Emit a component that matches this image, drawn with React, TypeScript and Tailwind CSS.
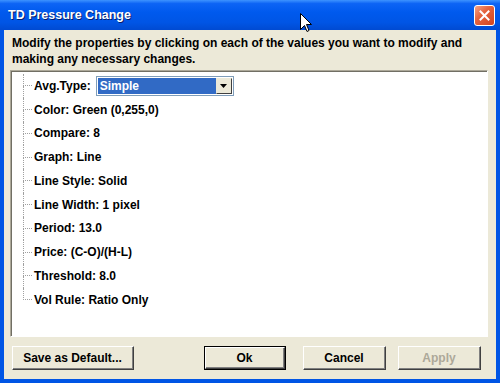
import React from "react";

const items = [
  "Color: Green (0,255,0)",
  "Compare: 8",
  "Graph: Line",
  "Line Style: Solid",
  "Line Width: 1 pixel",
  "Period: 13.0",
  "Price: (C-O)/(H-L)",
  "Threshold: 8.0",
  "Vol Rule: Ratio Only",
];

function Connector({ last }: { last?: boolean }) {
  return (
    <div className="flex flex-col self-stretch w-[9px] shrink-0">
      <div className="flex-1 border-l border-b border-dotted border-[#A0A0A0]" />
      <div className={"flex-1 border-l border-dotted " + (last ? "border-transparent" : "border-[#A0A0A0]")} />
    </div>
  );
}

function Btn({ children, def, disabled, w }: { children: React.ReactNode; def?: boolean; disabled?: boolean; w: string }) {
  return (
    <div className={(def ? "border border-black " : "") + w + " h-[24px] flex shrink-0"}>
      <div className="flex-1 border-t border-l border-white border-r border-b border-r-[#404040] border-b-[#404040] flex">
        <div className="flex-1 border-r border-b border-[#808080] bg-[#ECE9D8] flex items-center justify-center">
          <span className={"text-[12px] font-bold " + (disabled ? "text-[#ACA899]" : "text-black")}>{children}</span>
        </div>
      </div>
    </div>
  );
}

export default function App() {
  return (
    <div className="w-[500px] h-[383px] flex flex-col bg-[#0055E5] font-['Liberation_Sans',sans-serif] relative overflow-hidden">
      <div className="h-[30px] shrink-0 flex items-center pl-[8px] pr-[5px] bg-[linear-gradient(to_bottom,#3D93FF_0%,#0D64F5_12%,#005AEE_40%,#0055E5_75%,#004AD2_100%)]">
        <span className="text-white font-bold text-[12.5px] [text-shadow:1px_1px_0_#0A1E6B]">TD Pressure Change</span>
        <div className="ml-auto w-[21px] h-[21px] rounded-[3px] border border-white bg-[linear-gradient(135deg,#F4A386_0%,#E5643F_40%,#D2441F_100%)] flex items-center justify-center">
          <svg width="11" height="11" viewBox="0 0 11 11">
            <path d="M1.5 1.5 L9.5 9.5 M9.5 1.5 L1.5 9.5" stroke="white" strokeWidth="2" strokeLinecap="square" />
          </svg>
        </div>
      </div>
      <div className="flex-1 mx-[4px] mb-[4px] bg-[#ECE9D8] flex flex-col">
        <div className="pl-[8px] pt-[5px] text-[12px] font-bold leading-[16px] text-black">
          <div>Modify the properties by clicking on each of the values you want to modify and</div>
          <div>making any necessary changes.</div>
        </div>
        <div className="mt-[3px] ml-[6px] mr-[8px] h-[267px] border-t border-l border-[#ACA899] border-r border-b border-r-white border-b-white flex">
          <div className="flex-1 border-t border-l border-[#716F64] bg-white pl-[11px] pt-[2px] flex flex-col">
            <div className="flex items-center h-[23.75px]">
              <Connector />
              <span className="text-[12px] font-bold ml-[2px]">Avg.Type:</span>
              <div className="ml-[5px] w-[138px] h-[20px] border border-[#7F9DB9] bg-white flex p-[1px]">
                <div className="flex-1 bg-[#316AC5] text-white text-[12px] font-bold flex items-center pl-[2px]">Simple</div>
                <div className="w-[16px] border-t border-l border-[#ECE9D8] border-r border-b border-r-[#404040] border-b-[#404040] bg-[#ECE9D8] flex items-center justify-center">
                  <svg width="7" height="4" viewBox="0 0 7 4"><path d="M0 0 H7 L3.5 4 Z" fill="black" /></svg>
                </div>
              </div>
            </div>
            {items.map((t, i) => (
              <div key={t} className="flex items-center h-[23.75px]">
                <Connector last={i === items.length - 1} />
                <span className="text-[12px] font-bold ml-[2px]">{t}</span>
              </div>
            ))}
          </div>
        </div>
        <div className="flex items-center mt-[9px] pl-[8px]">
          <Btn w="w-[122px]">Save as Default...</Btn>
          <div className="ml-[70px] flex">
            <Btn w="w-[82px]" def>Ok</Btn>
            <div className="ml-[17px]"><Btn w="w-[83px]">Cancel</Btn></div>
            <div className="ml-[12px]"><Btn w="w-[83px]" disabled>Apply</Btn></div>
          </div>
        </div>
      </div>
      <svg className="absolute left-[300px] top-[13px]" width="12" height="20" viewBox="0 0 12 20">
        <path d="M0.5 0.5 V16.5 L4.5 12.5 L7 18.5 L9 17.5 L6.5 11.5 H11.5 Z" fill="white" stroke="black" strokeWidth="1" />
      </svg>
    </div>
  );
}
